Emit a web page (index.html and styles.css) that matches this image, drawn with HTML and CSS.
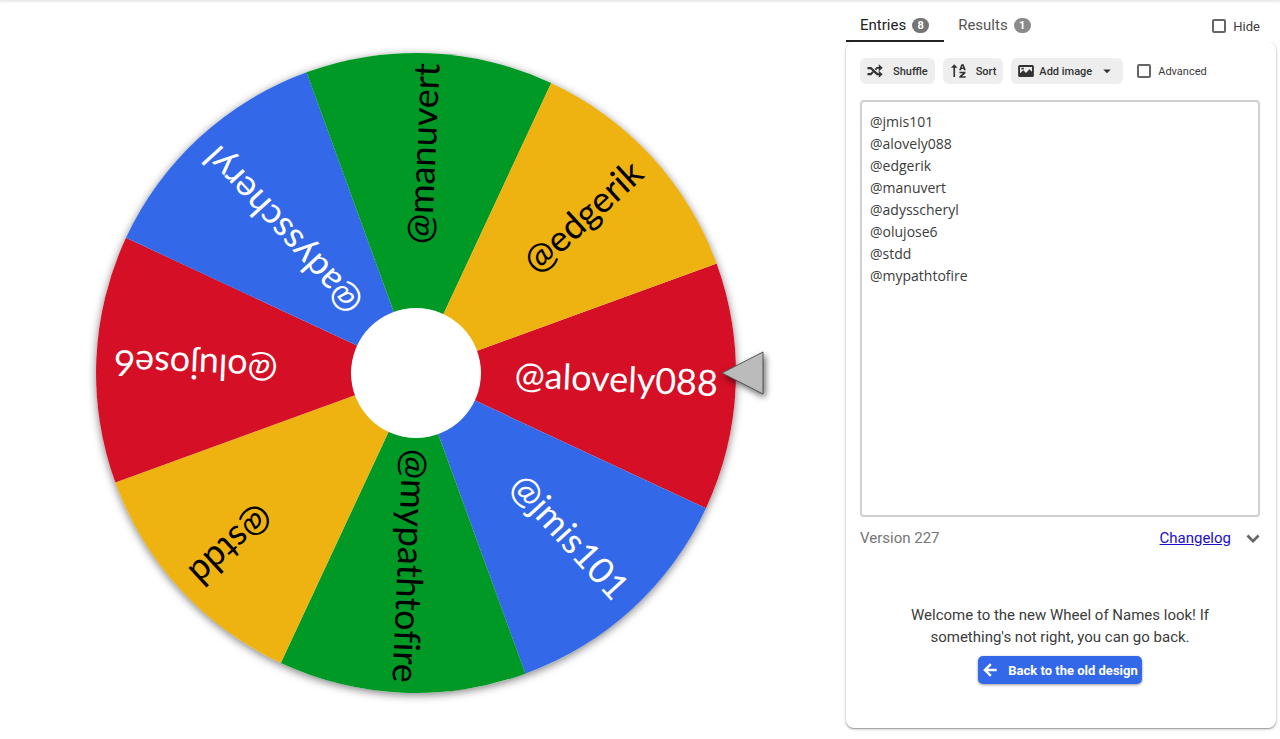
FILE: index.html
```html
<!DOCTYPE html>
<html lang="en">
<head>
  <meta charset="UTF-8">
  <meta name="viewport" content="width=device-width, initial-scale=1.0">
  <title>Wheel of Names</title>
  <link rel="stylesheet" href="styles.css">
</head>
<body>
  <div class="page">
    <main class="stage">
      <svg class="wheel" viewBox="-350 -350 700 700" role="img" aria-label="Wheel of names">
        <circle class="wheel-base" r="320"/>
        <!-- slices are 45 degrees each, the group is turned to the resting angle -->
        <g transform="rotate(2.5)">
          <path class="red" d="M0 0L295.6 -122.5A320 320 0 0 1 295.6 122.5Z"/>
          <path class="blue" transform="rotate(45)" d="M0 0L295.6 -122.5A320 320 0 0 1 295.6 122.5Z"/>
          <path class="green" transform="rotate(90)" d="M0 0L295.6 -122.5A320 320 0 0 1 295.6 122.5Z"/>
          <path class="yellow" transform="rotate(135)" d="M0 0L295.6 -122.5A320 320 0 0 1 295.6 122.5Z"/>
          <path class="red" transform="rotate(180)" d="M0 0L295.6 -122.5A320 320 0 0 1 295.6 122.5Z"/>
          <path class="blue" transform="rotate(225)" d="M0 0L295.6 -122.5A320 320 0 0 1 295.6 122.5Z"/>
          <path class="green" transform="rotate(270)" d="M0 0L295.6 -122.5A320 320 0 0 1 295.6 122.5Z"/>
          <path class="yellow" transform="rotate(315)" d="M0 0L295.6 -122.5A320 320 0 0 1 295.6 122.5Z"/>
          <text class="name light" x="302" y="10">@alovely088</text>
          <text class="name light" x="302" y="10" transform="rotate(45)">@jmis101</text>
          <text class="name" x="310" y="10" transform="rotate(90)">@mypathtofire</text>
          <text class="name" x="302" y="10" transform="rotate(135)">@stdd</text>
          <text class="name light" x="302" y="10" transform="rotate(180)">@olujose6</text>
          <text class="name light" x="302" y="10" transform="rotate(225)">@adysscheryl</text>
          <text class="name" x="310" y="10" transform="rotate(270)">@manuvert</text>
          <text class="name" x="302" y="10" transform="rotate(315)">@edgerik</text>
        </g>
        <circle class="hub" r="65"/>
        <path class="pointer" d="M306 0L347 -21V21Z"/>
      </svg>
    </main>

    <aside class="sidebar">
      <div class="tab-row">
        <div class="tabs" role="tablist">
          <button class="tab active" role="tab" aria-selected="true">Entries <span class="badge">8</span></button>
          <button class="tab" role="tab" aria-selected="false">Results <span class="badge">1</span></button>
        </div>
        <label class="check hide-check"><input type="checkbox"> Hide</label>
      </div>

      <section class="card">
        <div class="toolbar">
          <button class="tool-btn">
            <svg width="18" height="18" viewBox="0 0 24 24"><path d="M17 3 22.300 7.800 17 12.500V9H15.200L13.300 11 11.600 9.300 14.200 6.500H17ZM2 6.500H7L16 15H17V11.500L22.300 16.200 17 21V17.500H14.200L6 9.500H2ZM2 14.800H6L8.500 12.300 10.300 14 7 17.500H2Z"/></svg>
            <span>Shuffle</span>
          </button>
          <button class="tool-btn">
            <svg width="18" height="18" viewBox="0 0 24 24"><path d="M7 3 11.500 7.800H8.100V20H5.900V7.800H2.500Z"/><path d="M16.500 3H19.500L22.500 11H20L19.500 9.400H16.500L16 11H13.500ZM18 5 17.100 7.600H18.900ZM14 13H22V15L17.400 19H22.200V21H13.800V19L18.400 15H14Z"/></svg>
            <span>Sort</span>
          </button>
          <button class="tool-btn image-btn">
            <svg width="18" height="18" viewBox="0 0 24 24"><path fill-rule="evenodd" d="M3.500 4H20.500Q22.500 4 22.500 6V18Q22.500 20 20.500 20H3.500Q1.500 20 1.500 18V6Q1.500 4 3.500 4ZM4 6.500V15L8.500 11 12 14.500 16.500 9.500 20 13V6.500ZM6 7.500H9V10H6Z"/></svg>
            <span>Add image</span>
            <svg class="caret" width="18" height="18" viewBox="0 0 24 24"><path d="M7 10l5 5 5-5z"/></svg>
          </button>
          <label class="check"><input type="checkbox"> Advanced</label>
        </div>

        <textarea class="entries" aria-label="Entries" spellcheck="false">@jmis101
@alovely088
@edgerik
@manuvert
@adysscheryl
@olujose6
@stdd
@mypathtofire</textarea>

        <div class="version-row">
          <span class="version">Version 227</span>
          <a href="#">Changelog</a>
          <button class="expand-btn" aria-label="Expand">
            <svg width="24" height="24" viewBox="0 0 24 24"><path d="M7.400 8.600 12 13.200l4.600-4.600L18.500 10.500 12 17 5.500 10.500z"/></svg>
          </button>
        </div>

        <div class="welcome">
          <p>Welcome to the new Wheel of Names look! If something's not right, you can go back.</p>
          <button class="back-btn">
            <svg width="20" height="20" viewBox="0 0 24 24"><path d="M20 10.500v3H9.500l4.500 4.500-2.100 2.100L3.800 12l8.100-8.100L14 6l-4.500 4.500z"/></svg>
            <span>Back to the old design</span>
          </button>
        </div>
      </section>
    </aside>
  </div>
</body>
</html>
```
FILE: styles.css
```css
:root {
  --blue: #3369e8;
  --text-color: #3c3c3c;
  --muted: #757575;
  --button-bg: #eeeeee;
}

* {
  box-sizing: border-box;
}

body {
  margin: 0;
  font-family: Roboto, sans-serif;
  font-size: 14px;
  color: var(--text-color);
  background: #fff;
}

button {
  font-family: inherit;
  border: none;
  cursor: pointer;
}

svg {
  fill: currentColor;
}

.page {
  display: flex;
  gap: 14px;
  min-height: 100vh;
  padding: 0 4px 11px 0;
  box-shadow: inset 0 3px 2px -1px #e9e9e9;
}

/* wheel */
.stage {
  flex: 1;
  display: flex;
  justify-content: center;
  align-items: flex-start;
  padding-top: 23px;
}

.wheel {
  width: 100%;
  max-width: 700px;
  overflow: visible;
}

.wheel-base {
  fill: #fff;
  filter: drop-shadow(0 2px 4px rgba(0, 0, 0, 0.5));
}

.red { fill: #d50f25; }
.blue { fill: #3369e8; }
.green { fill: #009925; }
.yellow { fill: #eeb211; }

.name {
  font-family: Lato, sans-serif;
  font-size: 36px;
  font-variant-ligatures: none;
  text-anchor: end;
  fill: #000;
}

.name.light {
  fill: #fff;
}

.hub {
  fill: #fff;
}

.pointer {
  fill: #bbb;
  stroke: #555;
  stroke-width: 1;
  filter: drop-shadow(2px 3px 3px rgba(0, 0, 0, 0.6));
}

/* sidebar */
.sidebar {
  flex: 0 0 430px;
  display: flex;
  flex-direction: column;
}

.tab-row {
  display: flex;
  justify-content: space-between;
  align-items: center;
  height: 42px;
  padding-right: 16px;
}

.tabs {
  display: flex;
  height: 100%;
}

.tab {
  display: flex;
  align-items: center;
  gap: 6px;
  padding: 10px 15px 0 14px;
  background: none;
  border-bottom: 2px solid transparent;
  font-size: 15px;
  color: #555;
}

.tab.active {
  color: #222;
  border-bottom-color: #222;
}

.badge {
  display: inline-flex;
  align-items: center;
  justify-content: center;
  width: 17px;
  height: 15px;
  border-radius: 8px;
  background: var(--muted);
  color: #fff;
  font-size: 11px;
  font-weight: 700;
}

.tab:not(.active) .badge {
  background: #8a8a8a;
}

.check {
  display: flex;
  align-items: center;
  gap: 7px;
  font-size: 11px;
}

.check input {
  appearance: none;
  width: 14px;
  height: 14px;
  margin: 0;
  border: 2px solid #666;
  border-radius: 2px;
}

.hide-check {
  padding-top: 10px;
  font-size: 13px;
}

.card {
  flex: 1;
  padding: 16px 16px 16px 14px;
  border-radius: 8px;
  box-shadow: 0 1px 3px rgba(0, 0, 0, 0.3), 0 1px 1px rgba(0, 0, 0, 0.2);
  clip-path: inset(0 -4px -4px -4px);
}

.toolbar {
  display: flex;
  align-items: center;
  gap: 8px;
  margin-bottom: 16px;
}

.tool-btn {
  display: flex;
  align-items: center;
  gap: 9px;
  height: 26px;
  padding: 0 7px 0 6px;
  border-radius: 6px;
  background: var(--button-bg);
  color: #333;
  font-size: 11px;
  font-weight: 500;
}

.image-btn {
  gap: 4px;
}

.image-btn .caret {
  margin-left: 2px;
}

.toolbar .check {
  margin-left: 6px;
}

.entries {
  display: block;
  width: 100%;
  height: 417px;
  padding: 9px 8px;
  border: 2px solid #d0d0d0;
  border-radius: 4px;
  outline: none;
  resize: none;
  font-family: "Open Sans", sans-serif;
  font-size: 14px;
  line-height: 22px;
  color: var(--text-color);
}

.version-row {
  display: flex;
  align-items: center;
  height: 42px;
  font-size: 15px;
}

.version {
  flex: 1;
  color: var(--muted);
}

.version-row a {
  color: #1a0dce;
}

.expand-btn {
  display: flex;
  margin: 0 -5px 0 10px;
  padding: 0;
  background: none;
  color: #666;
}

.welcome {
  display: flex;
  flex-direction: column;
  align-items: center;
  padding-top: 45px;
  text-align: center;
}

.welcome p {
  max-width: 320px;
  margin: 0 0 8px;
  font-size: 15px;
  line-height: 22px;
}

.back-btn {
  display: flex;
  align-items: center;
  gap: 8px;
  height: 28px;
  padding: 0 4px 0 2px;
  border-radius: 5px;
  background: var(--blue);
  box-shadow: 0 1px 3px rgba(0, 0, 0, 0.4);
  color: #fff;
  font-size: 13px;
  font-weight: 700;
}
```
